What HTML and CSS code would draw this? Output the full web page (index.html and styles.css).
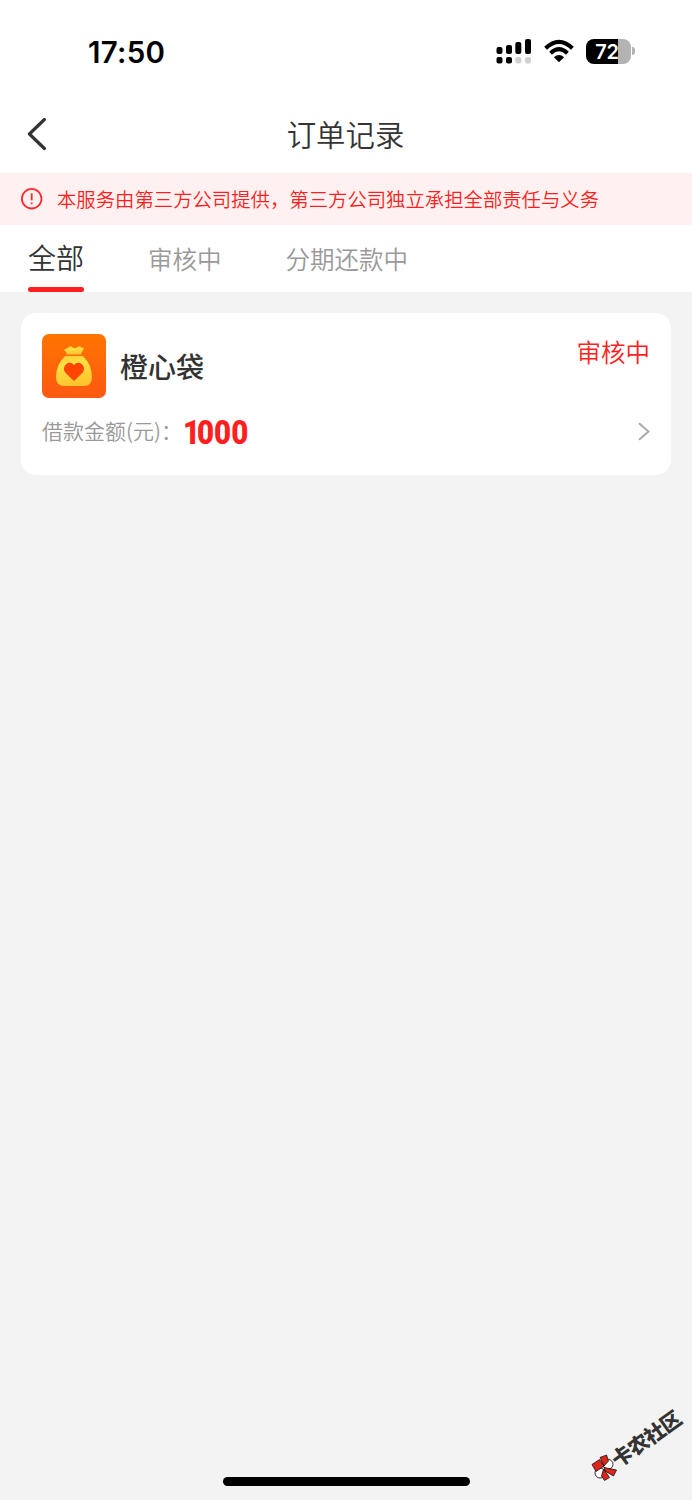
FILE: index.html
```html
<!DOCTYPE html>
<html lang="zh-CN">
<head>
<meta charset="utf-8">
<title>订单记录</title>
<link rel="stylesheet" href="styles.css">
</head>
<body>
<div class="screen">
  <header class="status-bar">
    <span class="time">17:50</span>
    <div class="indicators">
      <svg class="signal" width="36" height="26" viewBox="0 0 36 26">
        <rect x="0.5" y="9" width="6" height="7" rx="2"/><rect x="10" y="7" width="6" height="9" rx="2"/><rect x="19.3" y="4" width="6" height="12" rx="2"/><rect x="29" y="1" width="6" height="15" rx="2"/>
        <rect x="0.5" y="19" width="6" height="6.5" rx="2"/><rect x="10" y="19" width="6" height="6.5" rx="2"/><rect class="dim" x="19.3" y="19" width="6" height="6.5" rx="2"/><rect class="dim" x="29" y="19" width="6" height="6.5" rx="2"/>
      </svg>
      <svg class="wifi" width="30" height="24" viewBox="0 0 30 24">
        <path class="arc" d="M1.6 9.2Q15-3.6 28.4 9.2"/><path class="arc" d="M6.6 14.2Q15 6.2 23.4 14.2"/>
        <path d="M9.9 18.2Q15 13.8 20.1 18.2L15 23.2Z"/>
      </svg>
      <div class="battery"><span>72</span></div>
      <i class="battery-tip"></i>
    </div>
  </header>
  <nav class="nav-bar">
    <svg class="back" width="20" height="34" viewBox="0 0 20 34"><path d="M17.4 1.5L2.4 16L17.4 30.5"/></svg>
    <h1>订单记录</h1>
  </nav>
  <div class="notice">
    <svg width="22" height="22" viewBox="0 0 22 22"><circle cx="10.7" cy="10.7" r="9.8"/><path d="M10.7 5.2V12.3M10.7 14.4V16.3"/></svg>
    <span>本服务由第三方公司提供，第三方公司独立承担全部责任与义务</span>
  </div>
  <div class="tabs">
    <span class="tab active">全部</span>
    <span class="tab">审核中</span>
    <span class="tab">分期还款中</span>
  </div>
  <main class="content">
    <article class="card">
      <div class="card-head">
        <svg class="logo" width="64" height="64" viewBox="0 0 64 64">
          <defs>
            <linearGradient id="tile" x2="0" y2="1"><stop stop-color="#ff7500"/><stop offset="1" stop-color="#ff5811"/></linearGradient>
            <linearGradient id="bag" x2="0.25" y2="1"><stop stop-color="#ffc735"/><stop offset="0.35" stop-color="#ffe044"/><stop offset="1" stop-color="#ffc52d"/></linearGradient>
          </defs>
          <rect width="64" height="64" rx="7" fill="url(#tile)"/>
          <path fill="url(#bag)" d="M22.3 15.2Q25 15.5 27 12.8Q29 11.5 31 13.8Q33 15 35 13.3L37.5 12.3Q39 12.2 39.5 14Q42 12.5 41.6 15.2Q40.5 17.5 39.5 18.5V20.5H24.5V18.5Q22.2 17 22.3 15.2Z"/>
          <path fill="url(#bag)" d="M23 22H41Q50 31 50 43Q50 52 41.5 52H22.5Q14 52 14 43Q14 31 23 22Z"/>
          <path fill="#ff4500" d="M32 47L24 39.3C21.5 37 21.3 33 23.8 30.5C26.4 28 30 28.5 32 31.2C34 28.5 37.6 28 40.2 30.5C42.7 33 42.5 37 40 39.3Z"/>
        </svg>
        <h2>橙心袋</h2>
        <span class="state">审核中</span>
      </div>
      <div class="card-row">
        <span class="label">借款金额(元)：</span>
        <strong><span class="lead">1</span>000</strong>
        <svg class="arrow" width="12" height="20" viewBox="0 0 12 20"><path d="M1 1.2L10.5 9.5L1 17.8"/></svg>
      </div>
    </article>
  </main>
  <div class="home-indicator"></div>
  <div class="watermark">
    <svg width="27" height="28" viewBox="0 0 27 28">
      <circle class="petal" cx="17" cy="10.3" r="5"/><circle class="petal" cx="9" cy="19" r="5"/>
      <path class="ribbon" d="M1 10.5L8.5 5.5L13 12L5 17.5ZM9 3.5L15.5 1L17.5 7L13 12ZM13 13.5L25.5 16L22.5 22L14 17ZM12.5 15L18.5 23.5L13.5 26.5L10.5 22Z"/>
    </svg>
    <span>卡农社区</span>
  </div>
</div>
</body>
</html>
```
FILE: styles.css
```css
* { box-sizing: border-box; }
body { margin: 0; font-family: "Noto Sans CJK SC", sans-serif; font-weight: 350; color: #333; }
.screen { position: relative; display: flex; flex-direction: column; height: 1500px; background: #f3f3f3; overflow: hidden; }
.status-bar { display: flex; justify-content: space-between; align-items: center; height: 96px; padding: 6px 57px 0 88px; background: #fff; color: #000; }
.time { padding-top: 1px; font: 600 29.5px/36px Inter, sans-serif; letter-spacing: .25px; }
.indicators { display: flex; align-items: center; }
.signal { margin-right: 12px; }
.dim { fill: #d0d0d0; }
.wifi { margin-right: 12px; }
.arc { fill: none; stroke: #000; stroke-width: 4; }
.battery { width: 45px; height: 25px; border-radius: 8px; background: linear-gradient(90deg, #000 72%, #b3b3b3 72%); color: #fff; font: 600 20px/26px Inter, sans-serif; text-align: center; letter-spacing: -.3px; padding-right: 3px; }
.battery-tip { width: 3px; height: 8px; margin-left: 1px; border-radius: 0 4px 4px 0; background: #b3b3b3; }
.nav-bar { display: grid; grid-template-columns: 20px 1fr 20px; align-items: center; height: 77px; padding: 0 27px; background: #fff; }
.back { fill: none; stroke: #333; stroke-width: 3.2; stroke-linecap: round; stroke-linejoin: round; }
h1, h2 { margin: 0; }
h1 { padding-right: 1px; padding-bottom: 4px; font-size: 29.4px; line-height: 44px; font-weight: 350; text-align: center; }
.notice { display: flex; align-items: center; gap: 14px; height: 52px; padding-left: 21px; background: #fff1f1; color: #ff1e20; font-size: 19.38px; line-height: 28px; white-space: nowrap; }
.notice svg { fill: none; stroke: #ff2c2d; stroke-width: 1.8; }
.notice span { padding-bottom: 1px; }
.tabs { display: flex; height: 67px; padding-left: 28px; gap: 64px; background: #fff; color: #999; font-size: 24.5px; line-height: 67px; }
.tab.active { position: relative; color: #333; font-size: 28px; line-height: 65px; }
.tab.active::after { content: ""; position: absolute; left: 0; right: 0; bottom: 0; height: 5px; border-radius: 3px; background: #ff1e20; }
.content { flex: 1; padding: 21px; }
.card { height: 162px; padding: 21px; border-radius: 15px; background: #fff; }
.card-head { display: flex; align-items: center; height: 64px; }
h2 { margin-left: 14px; font-size: 28px; font-weight: 500; line-height: 42px; }
.state { align-self: flex-start; margin-left: auto; color: #ff1e20; font-size: 24.5px; line-height: 36px; }
.card-row { display: flex; align-items: center; height: 36px; margin-top: 16px; }
.label { width: 141px; padding-bottom: 4px; color: #999; font-size: 21px; line-height: 32px; white-space: nowrap; }
strong { color: #ff1e20; font: 900 33.5px/36px Roboto, sans-serif; padding-top: 2px; transform: scaleX(.88); transform-origin: left; }
.lead { letter-spacing: -3.5px; }
.arrow { margin-left: auto; fill: none; stroke: #aaa; stroke-width: 2; }
.home-indicator { width: 247px; height: 9px; margin: 0 auto 14px; border-radius: 5px; background: #000; }
.watermark { position: absolute; left: 591px; top: 1454px; width: 27px; height: 28px; }
.watermark > span { position: absolute; left: 22px; top: -5px; transform: rotate(-35.5deg); transform-origin: 0 50%; font-size: 20.5px; line-height: 24px; font-weight: 900; letter-spacing: -.6px; white-space: nowrap; }
.petal { fill: #fff; stroke: #333; stroke-width: 1; }
.ribbon { fill: #df251b; stroke: #111; stroke-width: .8; }
```
